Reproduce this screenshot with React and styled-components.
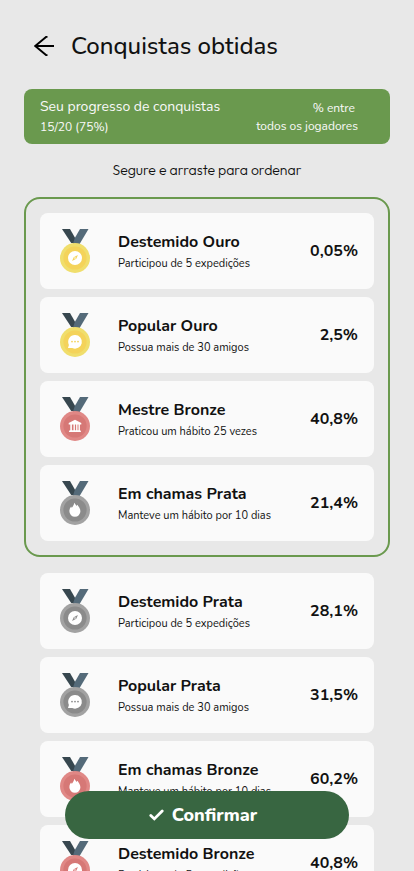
import React from "react";
import styled, { createGlobalStyle } from "styled-components";

const GlobalStyle = createGlobalStyle`
  * { box-sizing: border-box; }
  body {
    margin: 0;
    background: #e8e8e8;
    color: #111;
    font-family: Nunito, Lato, "Open Sans", sans-serif;
  }
  h1, h2, p, ul { margin: 0; padding: 0; }
`;

const Screen = styled.main`
  height: 100vh;
  padding: 28px 24px 0;
  overflow-y: auto;
  scrollbar-width: none;
`;

const Header = styled.header`
  display: flex;
  align-items: center;
  gap: 12px;
  height: 36px;
  padding-left: 5px;
`;

const BackButton = styled.button`
  display: flex;
  align-items: center;
  justify-content: center;
  width: 30px;
  height: 30px;
  padding: 0;
  border: 0;
  background: none;
  color: #000;
`;

const PageTitle = styled.h1`
  font-size: 24px;
  line-height: 36px;
  font-weight: 500;
`;

const Progress = styled.section`
  display: flex;
  justify-content: space-between;
  margin-top: 25px;
  padding: 8px 32px 7px 16px;
  border-radius: 8px;
  background: #6a994e;
  color: #fafafa;
`;

const ProgressLabel = styled.h2`
  font-size: 14px;
  line-height: 20px;
  font-weight: 400;
`;

const ProgressValue = styled.p`
  font-size: 12px;
  line-height: 20px;
`;

const Scope = styled.p`
  padding-top: 2px;
  font-size: 12px;
  line-height: 18px;
  text-align: right;
`;

const Hint = styled.p`
  margin: 16px 0;
  font-family: Outfit, Urbanist, Lexend, Nunito, Lato, sans-serif;
  font-size: 14px;
  line-height: 21px;
  font-weight: 300;
  text-align: center;
`;

const List = styled.ul`
  display: flex;
  flex-direction: column;
  gap: 8px;
  padding: ${(p) => (p.$featured ? "14px" : "16px")};
  border: ${(p) => (p.$featured ? "2px solid #6a994e" : "0")};
  border-radius: 16px;
`;

const Card = styled.li`
  display: flex;
  align-items: center;
  gap: 28px;
  height: 76px;
  padding: 0 16px 0 20px;
  border-radius: 8px;
  background: #fafafa;
  list-style: none;
`;

const Medal = styled.svg`
  flex: none;
`;

const Details = styled.div`
  display: grid;
  gap: 1px;
  flex: 1;
  min-width: 0;
  padding-top: 1px;
`;

const Name = styled.h2`
  font-size: 16px;
  line-height: 24px;
  font-weight: 700;
`;

const Description = styled.p`
  font-size: 11px;
  line-height: 18px;
`;

const Percent = styled.strong`
  font-size: 16px;
  line-height: 24px;
  font-weight: 700;
`;

const ConfirmButton = styled.button`
  position: fixed;
  left: 65px;
  right: 65px;
  bottom: 32px;
  display: flex;
  align-items: center;
  justify-content: center;
  gap: 8px;
  height: 48px;
  padding: 0 8px 0 0;
  border: 0;
  border-radius: 24px;
  background: #386641;
  color: #fff;
  font: inherit;
  font-size: 18px;
  line-height: 24px;
  font-weight: 800;
`;

const metals = {
  ouro: { outer: "#f0de6c", inner: "#f4d35a" },
  prata: { outer: "#a2a2a2", inner: "#8b8b8b" },
  bronze: { outer: "#e08886", inner: "#d67876" },
};

function Emblem({ kind, color }) {
  if (kind === "compass") {
    return (
      <g>
        <circle cx="15" cy="29" r="7" fill="#fff" />
        <path d="M17.9 26.1 16.3 29.7 12.1 31.9 13.7 28.3Z" fill={color} />
        <circle cx="15" cy="29" r="0.8" fill="#fff" />
      </g>
    );
  }
  if (kind === "chat") {
    return (
      <g>
        <path d="M15 22a6.8 6.8 0 1 1-2.7 13H8l.9-3.1A6.8 6.8 0 0 1 15 22Z" fill="#fff" />
        <circle cx="12" cy="28.6" r="0.9" fill={color} />
        <circle cx="15" cy="28.6" r="0.9" fill={color} />
        <circle cx="18" cy="28.6" r="0.9" fill={color} />
      </g>
    );
  }
  if (kind === "temple") {
    return (
      <path
        d="M15 22.7 21.3 26v1.4H8.7V26ZM10.3 27.4h1.6v5.8h1.6v-5.8h1.4v5.8h1.2v-5.8h1.4v5.8h1v-5.8h1.4v5.8h.4l.8 1.8H8.8l.8-1.8h.7Z"
        fill="#fff"
      />
    );
  }
  return (
    <path
      d="M14.2 21.8c.9 1.2 1.8 2.2 2.5 3.3.2-.6.4-1 .8-1.4.8 1.8 2.9 3.4 2.9 6.6a5.5 5.5 0 0 1-11 0c0-2.5 1-3.6 1.7-4.7.2.5.4.9.8 1.2.9-1.5 2.2-2.8 2.3-5Z"
      fill="#fff"
    />
  );
}

function MedalIcon({ metal, kind }) {
  const { outer, inner } = metals[metal];
  return (
    <Medal width="30" height="44" viewBox="0 0 30 44" aria-hidden="true">
      <path d="M2 0h8l8 14h-6.8Z" fill="#37474f" />
      <path d="M20 0h8.5L19 16h-6.5l2.3-7Z" fill="#546a79" />
      <circle cx="15" cy="29" r="15" fill={outer} />
      <circle cx="15" cy="29" r="11.6" fill={inner} />
      <Emblem kind={kind} color={inner} />
    </Medal>
  );
}

const featured = [
  ["Destemido Ouro", "Participou de 5 expedições", "0,05%", "ouro", "compass"],
  ["Popular Ouro", "Possua mais de 30 amigos", "2,5%", "ouro", "chat"],
  ["Mestre Bronze", "Praticou um hábito 25 vezes", "40,8%", "bronze", "temple"],
  ["Em chamas Prata", "Manteve um hábito por 10 dias", "21,4%", "prata", "flame"],
];

const others = [
  ["Destemido Prata", "Participou de 5 expedições", "28,1%", "prata", "compass"],
  ["Popular Prata", "Possua mais de 30 amigos", "31,5%", "prata", "chat"],
  ["Em chamas Bronze", "Manteve um hábito por 10 dias", "60,2%", "bronze", "flame"],
  ["Destemido Bronze", "Participou de 5 expedições", "40,8%", "bronze", "compass"],
];

function Achievements({ items, ...rest }) {
  return (
    <List {...rest}>
      {items.map(([name, description, percent, metal, kind]) => (
        <Card key={name} draggable>
          <MedalIcon metal={metal} kind={kind} />
          <Details>
            <Name>{name}</Name>
            <Description>{description}</Description>
          </Details>
          <Percent>{percent}</Percent>
        </Card>
      ))}
    </List>
  );
}

export default function App() {
  return (
    <>
      <GlobalStyle />
      <Screen>
        <Header>
          <BackButton type="button" aria-label="Voltar">
            <svg width="20" height="20" viewBox="0 0 20 20" fill="none" stroke="currentColor" strokeWidth="2">
              <path d="M20 10H1.5M13.5.8H12.3L1.2 10 12.3 19.2H13.5" />
            </svg>
          </BackButton>
          <PageTitle>Conquistas obtidas</PageTitle>
        </Header>
        <Progress>
          <div>
            <ProgressLabel>Seu progresso de conquistas</ProgressLabel>
            <ProgressValue>15/20 (75%)</ProgressValue>
          </div>
          <Scope>
            % entre{"\u00a0"}
            <br />
            todos os jogadores
          </Scope>
        </Progress>
        <Hint>Segure e arraste para ordenar</Hint>
        <Achievements items={featured} $featured />
        <Achievements items={others} />
      </Screen>
      <ConfirmButton type="button">
        <svg width="15" height="12" viewBox="0 0 15 12" fill="none" stroke="currentColor" strokeWidth="2.8" strokeLinecap="round" aria-hidden="true">
          <path d="M1.8 6.5 5.3 9.9 13.2 2" />
        </svg>
        Confirmar
      </ConfirmButton>
    </>
  );
}
